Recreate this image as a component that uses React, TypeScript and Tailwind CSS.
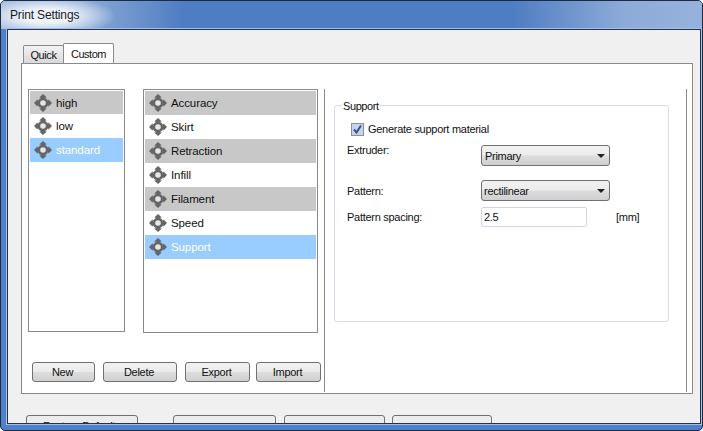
const font = "[font-family:'Liberation_Sans',Arial,sans-serif]";

function MoveIcon() {
  return (
    <svg width="20" height="20" viewBox="0 0 20 20" className="shrink-0 blur-[0.5px]">
      <path d="M10 1 L13.8 4.6 L12.4 4.6 L12.4 5.2 A5.6 5.6 0 0 1 14.8 7.6 L15.4 7.6 L15.4 6.2 L19 10 L15.4 13.8 L15.4 12.4 L14.8 12.4 A5.6 5.6 0 0 1 12.4 14.8 L12.4 15.4 L13.8 15.4 L10 19 L6.2 15.4 L7.6 15.4 L7.6 14.8 A5.6 5.6 0 0 1 5.2 12.4 L4.6 12.4 L4.6 13.8 L1 10 L4.6 6.2 L4.6 7.6 L5.2 7.6 A5.6 5.6 0 0 1 7.6 5.2 L7.6 4.6 L6.2 4.6 Z" fill="#666666" />
      <circle cx="10" cy="10" r="2.8" fill="#e6e6e6" />
    </svg>
  );
}

type Kind = "gray" | "white" | "blue";

function Row({ label, kind, h }: { label: string; kind: Kind; h: string }) {
  const bg = kind === "gray" ? "bg-[#c8c8c8] text-[#111]" : kind === "blue" ? "bg-[#99ccff] text-white" : "bg-white text-[#111]";
  return (
    <div className={`flex ${h} items-center gap-[3px] pl-[3px] text-[11.5px] tracking-[-0.1px] ${bg}`}>
      <MoveIcon />
      <span>{label}</span>
    </div>
  );
}

function ListBox({ width, ml, height, first, rows }: { width: string; ml: string; height: string; first: string; rows: [string, Kind][] }) {
  return (
    <div className={`${width} ${ml} ${height} shrink-0 border border-[#8a8a8a] bg-white p-px`}>
      {rows.map(([l, k], i) => (
        <Row key={l} label={l} kind={k} h={i === 0 ? first : "h-[24px]"} />
      ))}
    </div>
  );
}

function Btn({ label, w, ml }: { label: string; w: string; ml: string }) {
  return (
    <button className={`${w} ${ml} h-[20px] shrink-0 rounded-[3px] border border-[#707070] bg-[linear-gradient(#f2f2f2_0%,#ebebeb_48%,#dddddd_52%,#cfcfcf_100%)] pr-[2px] text-center leading-[17px] text-[#111]`}>
      {label}
    </button>
  );
}

function Select({ label, pl }: { label: string; pl: string }) {
  return (
    <div className={`flex h-[21px] w-[129px] items-center justify-between rounded-[3px] border border-[#707070] bg-[linear-gradient(#f2f2f2_0%,#ebebeb_48%,#dddddd_52%,#cfcfcf_100%)] ${pl} pr-[4px] text-[#111]`}>
      <span>{label}</span>
      <svg width="8" height="4" viewBox="0 0 8 4"><path d="M0 0 H8 L4 4 Z" fill="#222" /></svg>
    </div>
  );
}

export default function App() {
  return (
    <div className={`${font} flex h-[431px] w-[703px] flex-col overflow-hidden rounded-t-[5px] rounded-b-[5px] border border-[#1d2b40] bg-[#5080c5] text-[11px] leading-[14px] tracking-[-0.28px]`}>
      <div className="flex h-[28px] shrink-0 items-center bg-[radial-gradient(ellipse_70px_20px_at_45px_15px,#eef3fa_35%,rgba(238,243,250,0)_100%),linear-gradient(90deg,#9db6dc_0%,#8fadd8_11%,#4f7dc2_26%,#4f7dc2_73%,#8dabd8_89%,#96b2dc_100%)] pl-[9px] text-[12px] tracking-[-0.15px] text-[#1a1a1a]">
        Print Settings
      </div>
      <div className="mr-[1px] ml-[6px] flex h-[395px] shrink-0 flex-col overflow-hidden border border-[#24344f] bg-[#f0f0f0] shadow-[0_0_0_1px_#a4c0e8]">
        <div className="mt-[13px] ml-[15px] flex h-[20px] items-end">
          <div className="flex h-[18px] w-[41px] items-center justify-center rounded-t-[2px] border-x border-t border-[#8a8a8a] bg-[linear-gradient(#f2f2f2,#d9d9d9)] text-[11px] tracking-[-0.4px] text-[#111]">Quick</div>
          <div className="-ml-px flex h-[20px] w-[51px] items-start justify-center rounded-t-[2px] border-x border-t border-[#8a8a8a] bg-white pt-[3px] text-[11px] tracking-[-0.5px] text-[#111]">Custom</div>
        </div>
        <div className="ml-[13px] flex h-[331px] w-[672px] shrink-0 border border-[#8a8a8a] bg-white">
          <div className="flex w-[302px] shrink-0 flex-col">
            <div className="mt-[25px] flex">
              <ListBox width="w-[97px]" ml="ml-[6px]" height="h-[243px]" first="h-[23px]" rows={[["high", "gray"], ["low", "white"], ["standard", "blue"]]} />
              <ListBox width="w-[175px]" ml="ml-[18px]" height="h-[244px]" first="h-[24px]" rows={[["Accuracy", "gray"], ["Skirt", "white"], ["Retraction", "gray"], ["Infill", "white"], ["Filament", "gray"], ["Speed", "white"], ["Support", "blue"]]} />
            </div>
            <div className="mt-[29px] flex">
              <Btn label="New" w="w-[63px]" ml="ml-[10px]" />
              <Btn label="Delete" w="w-[74px]" ml="ml-[8px]" />
              <Btn label="Export" w="w-[65px]" ml="ml-[8px]" />
              <Btn label="Import" w="w-[65px]" ml="ml-[6px]" />
            </div>
          </div>
          <div className="mt-[25px] mb-px flex-1 border-l border-[#8a8a8a]">
            <div className="mt-[16px] ml-[9px] h-[217px] w-[335px] rounded-[3px] border border-[#d5dfe5] pl-[16px]">
              <div className="-mt-[7px] -ml-[9px] w-fit bg-white px-[1px] tracking-[-0.4px] text-[#111]">Support</div>
              <div className="mt-[9px] flex items-center gap-[4px] text-[#111]">
                <span className="flex h-[13px] w-[13px] items-center justify-center border border-[#8e8f8f] bg-[#c9d4e8]">
                  <svg width="11" height="11" viewBox="0 0 11 11"><path d="M2 5.5 L4.5 8.5 L9 1.5" fill="none" stroke="#3c4f9a" strokeWidth="2" /></svg>
                </span>
                <span>Generate support material</span>
              </div>
              <div className="-ml-[4px] mt-[9px] flex items-start">
                <span className="-mt-[2px] w-[134px] text-[#111]">Extruder:</span>
                <Select label="Primary" pl="pl-[3px]" />
              </div>
              <div className="-ml-[4px] mt-[14px] flex items-center">
                <span className="w-[134px] text-[#111]">Pattern:</span>
                <Select label="rectilinear" pl="pl-[2px]" />
              </div>
              <div className="-ml-[4px] mt-[6px] flex items-center text-[#111]">
                <span className="w-[134px]">Pattern spacing:</span>
                <div className="flex h-[20px] w-[106px] items-center rounded-[2px] border border-[#d0d7e2] bg-white pl-[2px]">2.5</div>
                <span className="ml-[29px]">[mm]</span>
              </div>
            </div>
          </div>
          <div className="mt-[25px] mb-px mr-[5px] w-px bg-[#8a8a90]" />
        </div>
        <div className="mt-[21px] flex">
          <div className="ml-[18px] h-[20px] w-[112px] rounded-[3px] border border-[#707070] bg-[#ececec] pt-[3px] pr-[6px] text-center text-[#111]">Restore Default</div>
          <div className="ml-[35px] h-[20px] w-[103px] rounded-[3px] border border-[#707070] bg-[#ececec]" />
          <div className="ml-[8px] h-[20px] w-[101px] rounded-[3px] border border-[#707070] bg-[#ececec]" />
          <div className="ml-[7px] h-[20px] w-[100px] rounded-[3px] border border-[#707070] bg-[#ececec]" />
        </div>
      </div>
    </div>
  );
}
